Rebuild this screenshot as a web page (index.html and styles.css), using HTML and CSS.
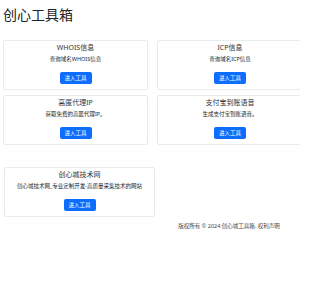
FILE: index.html
```html
<!DOCTYPE html>
<html lang="zh-CN">
<head>
<meta charset="utf-8">
<title>创心工具箱</title>
<link rel="stylesheet" href="styles.css">
</head>
<body>
<div class="page">
  <div class="inner">
    <h1 class="title">创心工具箱</h1>
    <div class="grid">
      <div class="card">
        <div class="card-title">WHOIS信息</div>
        <div class="card-text">查询域名WHOIS信息</div>
        <a class="btn">进入工具</a>
      </div>
      <div class="card">
        <div class="card-title">ICP信息</div>
        <div class="card-text">查询域名ICP信息</div>
        <a class="btn">进入工具</a>
      </div>
      <div class="card ghost"></div>
      <div class="card">
        <div class="card-title">高匿代理IP</div>
        <div class="card-text">获取免费的高匿代理IP。</div>
        <a class="btn">进入工具</a>
      </div>
      <div class="card">
        <div class="card-title">支付宝到账语音</div>
        <div class="card-text">生成支付宝到账语音。</div>
        <a class="btn">进入工具</a>
      </div>
    </div>
    <div class="links">
      <div class="card wide">
        <div class="card-title">创心城技术网</div>
        <div class="card-text">创心城技术网_专业定制开发-高质量采集技术的网站</div>
        <a class="btn">进入工具</a>
      </div>
    </div>
    <footer class="footer">版权所有 © 2024 创心城工具箱. 权利声明</footer>
  </div>
</div>
</body>
</html>
```
FILE: styles.css
```css
html, body {
  margin: 0;
  padding: 0;
  overflow: hidden;
  background: #fff;
}
body {
  font-family: "Noto Sans", "Noto Sans CJK SC", sans-serif;
  color: #212529;
}
.page {
  width: 300px;
  overflow: hidden;
}
.inner {
  width: 452px;
  padding-left: 3px;
}
.title {
  margin: 6px 0 0;
  font-size: 14px;
  line-height: 17px;
  font-weight: 400;
  color: #212529;
}
.grid {
  margin-top: 17px;
  display: grid;
  grid-template-columns: 145px 146px 145px;
  column-gap: 9px;
  row-gap: 5px;
}
.card {
  border: 1px solid #e9ecef;
  border-radius: 2px;
  padding: 3px 4px 5px;
  display: flex;
  flex-direction: column;
  align-items: center;
  text-align: center;
  height: 40px;
  box-sizing: content-box;
}
.ghost { visibility: hidden; }
.card-title {
  font-size: 7px;
  line-height: 8px;
  color: #333;
}
.card-text {
  margin-top: 4px;
  font-size: 5.5px;
  line-height: 7px;
  color: #212529;
  white-space: nowrap;
}
.btn {
  margin-top: 9px;
  width: 32px;
  height: 12px;
  box-sizing: border-box;
  background: #0d6efd;
  border-radius: 2px;
  color: #fff;
  font-size: 5.5px;
  line-height: 12px;
  text-align: center;
}
.links {
  margin-top: 22px;
  padding-left: 1px;
}
.wide {
  width: 141px;
}
.footer {
  margin-top: 5px;
  text-align: center;
  font-size: 5.5px;
  line-height: 8px;
  color: #444;
}
```
